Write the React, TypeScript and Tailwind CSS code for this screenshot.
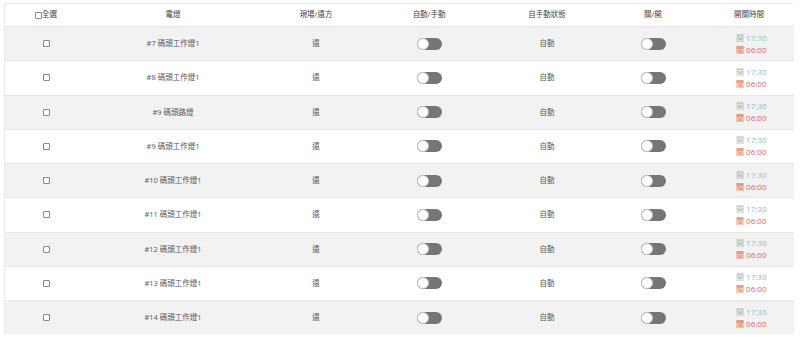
import React from 'react';

type Row = { id: string; name: string };

const rows: Row[] = [
  { id: '7', name: '#7 碼頭工作燈1' },
  { id: '8', name: '#8 碼頭工作燈1' },
  { id: '9a', name: '#9 碼頭路燈' },
  { id: '9b', name: '#9 碼頭工作燈1' },
  { id: '10', name: '#10 碼頭工作燈1' },
  { id: '11', name: '#11 碼頭工作燈1' },
  { id: '12', name: '#12 碼頭工作燈1' },
  { id: '13', name: '#13 碼頭工作燈1' },
  { id: '14', name: '#14 碼頭工作燈1' },
];

const cols = 'grid grid-cols-[82px_172px_114px_112px_124px_88px_1fr] items-center';

function Box() {
  return <span className="inline-block w-[7px] h-[7px] border border-[#8a8a8a] rounded-[1px] bg-white" />;
}

function Toggle() {
  return (
    <span className="relative inline-block w-[25px] h-[12px] rounded-full bg-[#767676]">
      <span className="absolute left-0 top-0 w-[12px] h-[12px] rounded-full bg-white border border-[#c4c4c4]" />
    </span>
  );
}

export default function App() {
  return (
    <div
      className="bg-white w-[800px] h-[338px] overflow-hidden pt-[3px] pl-[4px] text-[7.5px] text-[#555]"
      style={{ fontFamily: '"Open Sans", "Noto Sans CJK TC", sans-serif' }}
    >
      <div className="w-[790px] border-l border-t border-[#e8e8e8]">
        <div className={`${cols} h-[22px] text-[#444]`}>
          <div className="flex items-center justify-center">
            <Box />
            <span>全選</span>
          </div>
          <div className="text-center">電燈</div>
          <div className="text-center">現場/遠方</div>
          <div className="text-center">自動/手動</div>
          <div className="text-center">自手動狀態</div>
          <div className="text-center">關/開</div>
          <div className="text-center pl-[7px]">開關時間</div>
        </div>
        {rows.map((r, i) => (
          <div
            key={r.id}
            className={`${cols} h-[34.25px] border-t border-[#e6e6e6] ${i % 2 === 0 ? 'bg-[#f2f2f2]' : 'bg-white'}`}
          >
            <div className="flex justify-center">
              <Box />
            </div>
            <div className="text-center">{r.name}</div>
            <div className="text-center">遠</div>
            <div className="flex justify-center">
              <Toggle />
            </div>
            <div className="text-center">自動</div>
            <div className="flex justify-center">
              <Toggle />
            </div>
            <div className="flex flex-col items-start pl-[39px] text-[8px] leading-[12px]">
              <span className="text-[#8cc0c0]">開 17:30</span>
              <span className="text-[#d9675f]">關 06:00</span>
            </div>
          </div>
        ))}
      </div>
    </div>
  );
}
